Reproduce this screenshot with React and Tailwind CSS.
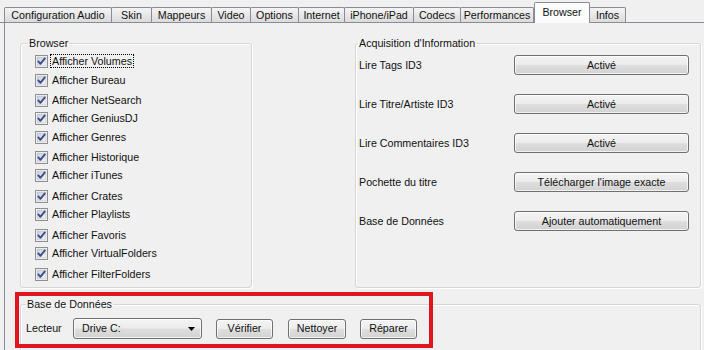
import React from "react";

// ─── Data ─────────────────────────────────────────────────────────────────────

const TABS = [
  { label: "Configuration Audio", w: "w-[108px]" },
  { label: "Skin", w: "w-[41px]" },
  { label: "Mappeurs", w: "w-[61px]" },
  { label: "Video", w: "w-[40px]" },
  { label: "Options", w: "w-[49px]" },
  { label: "Internet", w: "w-[47px]" },
  { label: "iPhone/iPad", w: "w-[70px]" },
  { label: "Codecs", w: "w-[48px]" },
  { label: "Performances", w: "w-[74px]" },
  { label: "Browser", w: "w-[56px]", active: true },
  { label: "Infos", w: "w-[37px]" },
];

// row spacing in the original dialog is not uniform, so each row carries its own gap
const BROWSER_ITEMS = [
  { label: "Afficher Volumes", mt: "mt-[4px]", focus: true },
  { label: "Afficher Bureau", mt: "mt-[5px]" },
  { label: "Afficher NetSearch", mt: "mt-[6px]" },
  { label: "Afficher GeniusDJ", mt: "mt-[4px]" },
  { label: "Afficher Genres", mt: "mt-[5px]" },
  { label: "Afficher Historique", mt: "mt-[6px]" },
  { label: "Afficher iTunes", mt: "mt-[4px]" },
  { label: "Afficher Crates", mt: "mt-[7px]" },
  { label: "Afficher Playlists", mt: "mt-[4px]" },
  { label: "Afficher Favoris", mt: "mt-[7px]" },
  { label: "Afficher VirtualFolders", mt: "mt-[4px]" },
  { label: "Afficher FilterFolders", mt: "mt-[7px]" },
];

const ACQUISITION = [
  { label: "Lire Tags ID3", value: "Activé" },
  { label: "Lire Titre/Artiste ID3", value: "Activé" },
  { label: "Lire Commentaires ID3", value: "Activé" },
  { label: "Pochette du titre", value: "Télécharger l'image exacte" },
  { label: "Base de Données", value: "Ajouter automatiquement" },
];

const BTN =
  "flex items-center justify-center rounded-[3px] border border-[#707070] bg-[linear-gradient(to_bottom,#f4f4f4_0%,#ececec_48%,#dedede_52%,#d2d2d2_100%)] shadow-[inset_0_0_0_1px_rgba(255,255,255,0.7)] text-[#111]";

// ─── Pieces ───────────────────────────────────────────────────────────────────

function Checkbox() {
  return (
    <svg width="13" height="13" viewBox="0 0 13 13" className="shrink-0">
      <defs>
        <linearGradient id="cbfill" x1="0" y1="0" x2="1" y2="1">
          <stop offset="0" stopColor="#c9cdd6" />
          <stop offset="1" stopColor="#f4f5f7" />
        </linearGradient>
      </defs>
      <rect x="0.5" y="0.5" width="12" height="12" fill="#fff" stroke="#8e8f8f" />
      <rect x="2" y="2" width="9" height="9" fill="url(#cbfill)" stroke="#b4b8c2" strokeWidth="0.6" />
      <path
        d="M3.3 6.4 L5.4 8.8 L9.8 3.4"
        fill="none"
        stroke="#3c4f8a"
        strokeWidth="1.9"
        strokeLinecap="round"
        strokeLinejoin="round"
      />
    </svg>
  );
}

function GroupBox({ title, className, children }) {
  return (
    <fieldset
      className={[
        "border border-[#d5d5d5] rounded-[3px] shadow-[inset_1px_1px_0_#fff,1px_1px_0_#fff]",
        className,
      ].join(" ")}
    >
      <legend className="px-px leading-[13px]">{title}</legend>
      {children}
    </fieldset>
  );
}

function TabStrip() {
  return (
    <div className="flex items-end h-[23px] pl-[4px] border-b border-[#898c95]">
      {TABS.map((t) =>
        t.active ? (
          <div
            key={t.label}
            className={[
              t.w,
              "relative -mb-px h-[21px] pt-[3px] flex justify-center bg-[#fcfcfc] border border-b-0 border-[#898c95] rounded-t-[2px]",
            ].join(" ")}
          >
            {t.label}
          </div>
        ) : (
          <div
            key={t.label}
            className={[
              t.w,
              "h-[15px] flex items-center justify-center -ml-px first:ml-0 border border-b-0 border-[#898c95] rounded-t-[2px] bg-gradient-to-b from-[#f4f4f4] to-[#dbdbdb]",
            ].join(" ")}
          >
            {t.label}
          </div>
        ),
      )}
    </div>
  );
}

// ─── App ──────────────────────────────────────────────────────────────────────

export default function App() {
  return (
    <div className="relative w-[704px] h-[350px] overflow-hidden bg-[#f0f0f0] text-[10.7px] leading-[13px] text-[#111] font-['Liberation_Sans',Arial,sans-serif]">
      <TabStrip />

      <div className="ml-[4px] border-l border-[#898c95] pl-[15px] pt-[14px] h-[327px]">
        <div className="flex">
          <GroupBox title="Browser" className="w-[232px] h-[251px] pl-[7px]">
            <div className="flex flex-col ml-[7px]">
              {BROWSER_ITEMS.map((it) => (
                <div key={it.label} className={[it.mt, "flex items-center h-[14px] gap-[2px]"].join(" ")}>
                  <Checkbox />
                  <span
                    className={
                      it.focus
                        ? "border border-dotted border-black px-px leading-[12px]"
                        : "border border-transparent px-px leading-[12px]"
                    }
                  >
                    {it.label}
                  </span>
                </div>
              ))}
            </div>
          </GroupBox>

          <GroupBox title="Acquisition d'Information" className="ml-[103px] w-[346px] h-[251px] pl-[2px] pr-[11px]">
            <div className="flex flex-col gap-[19px] mt-[5px]">
              {ACQUISITION.map((row) => (
                <div key={row.label} className="flex items-center justify-between h-[20px] pl-px">
                  <span>{row.label}</span>
                  <button className={[BTN, "w-[175px] h-[20px]"].join(" ")}>{row.value}</button>
                </div>
              ))}
            </div>
          </GroupBox>
        </div>

        <GroupBox title="Base de Données" className="mt-[10px] w-[681px] h-[70px] pl-[5px]">
          <div className="flex items-center mt-[7px] h-[21px]">
            <span className="w-[47px]">Lecteur</span>
            <div className={[BTN, "w-[129px] h-[21px] !justify-between pl-[8px] pr-[6px]"].join(" ")}>
              <span>Drive C:</span>
              <svg width="7" height="4" viewBox="0 0 7 4">
                <path d="M0 0 H7 L3.5 4 Z" fill="#000" />
              </svg>
            </div>
            <button className={[BTN, "ml-[14px] w-[57px] h-[20px]"].join(" ")}>Vérifier</button>
            <button className={[BTN, "ml-[15px] w-[58px] h-[20px]"].join(" ")}>Nettoyer</button>
            <button className={[BTN, "ml-[14px] w-[57px] h-[20px]"].join(" ")}>Réparer</button>
          </div>
        </GroupBox>
      </div>

      {/* red annotation frame drawn over the screenshot */}
      <div className="absolute left-[15px] top-[292px] w-[418px] h-[56px] border-4 border-[#e0161e] pointer-events-none" />
    </div>
  );
}
